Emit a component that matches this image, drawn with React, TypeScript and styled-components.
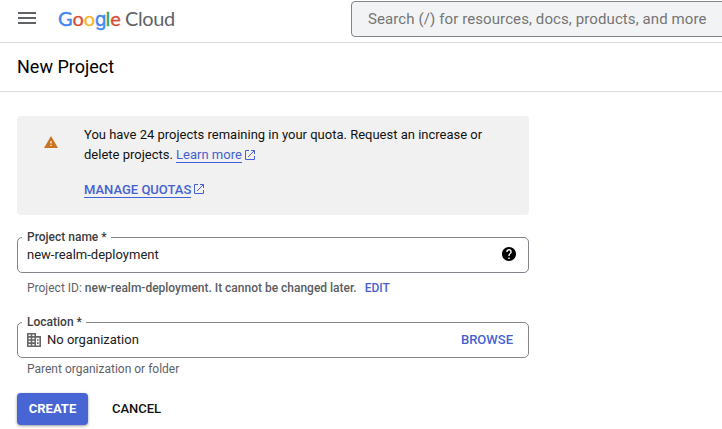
import React from "react";
import styled, { createGlobalStyle } from "styled-components";

const GlobalStyle = createGlobalStyle`
  * { box-sizing: border-box; }
  html, body { margin: 0; background: #fff; overflow: hidden; }
  body { font-family: Roboto, sans-serif; font-size: 13px; line-height: 20px; color: #000; }
  button { font: inherit; border: 0; background: none; padding: 0; margin: 0; cursor: pointer; }
  svg { display: block; flex: none; }
`;

const Page = styled.div`
  width: 722px;
  height: 429px;
  overflow: hidden;
`;

const TopBar = styled.header`
  display: flex;
  height: 43px;
  padding: 1px 0 0 18px;
  border-bottom: 1px solid #dadce0;
`;

const MenuButton = styled.button`
  flex: none;
  width: 18px;
  height: 12px;
  margin-top: 11px;
  display: flex;
  flex-direction: column;
  justify-content: space-between;
`;

const MenuLine = styled.span`
  width: 18px;
  height: 2px;
  background: #5f6368;
`;

const Logo = styled.div`
  display: flex;
  flex: none;
  width: 293px;
  margin-left: 22px;
  padding-top: 5px;
  font-family: Lato, sans-serif;
  font-size: 20px;
  line-height: 24px;
  color: #5f6368;
  white-space: pre;
`;

const Brand = styled.span`
  letter-spacing: -0.1px;
  width: 67px;
`;

const Product = styled.span`
  letter-spacing: -0.4px;
`;

const Letter = styled.span<{ $color: string; $round?: boolean }>`
  color: ${(p) => p.$color};
  font-family: ${(p) => (p.$round ? "Inter" : "Lato")}, sans-serif;
  font-size: ${(p) => (p.$round ? 18.5 : 20)}px;
  letter-spacing: ${(p) => (p.$round ? -0.7 : -0.1)}px;
  -webkit-text-stroke: 0.4px ${(p) => p.$color};
`;

const Search = styled.div`
  flex: none;
  width: 420px;
  height: 36px;
  padding-left: 16px;
  border: 1px solid #80868b;
  border-radius: 4px;
  background: #f1f3f4;
  color: #757575;
  font-size: 15px;
  line-height: 34px;
  letter-spacing: 0.1px;
`;

const TitleBar = styled.div`
  height: 49px;
  padding: 12px 17px 0;
  border-bottom: 1px solid #dadce0;
`;

const Title = styled.h1`
  margin: 0;
  font-size: 18px;
  font-weight: 400;
  line-height: 24px;
`;

const Content = styled.main`
  width: 529px;
  padding: 24px 0 0 17px;
`;

const Notice = styled.section`
  display: flex;
  height: 99px;
  padding: 9px 20px 0 27px;
  border-radius: 4px;
  background: #f1f1f1;
`;

const NoticeIcon = styled.div`
  width: 40px;
  padding-top: 11px;
`;

const NoticeText = styled.div`
  color: #111;
`;

const Line = styled.div`
  display: flex;
  align-items: center;
  height: 20px;
  white-space: pre;
`;

const LinkLine = styled(Line)`
  margin-top: 15px;
`;

const Link = styled.a<{ $strong?: boolean }>`
  height: 16px;
  margin-right: 3px;
  line-height: 16px;
  border-bottom: 1px solid #3f62d6;
  color: #4662d2;
  font-weight: ${(p) => (p.$strong ? 500 : 400)};
`;

const Field = styled.div`
  position: relative;
  display: flex;
  align-items: center;
  height: 36px;
  padding: 0 12px 0 9px;
  border: 1px solid #80868b;
  border-radius: 5px;
  color: #202124;
`;

const FieldGroup = styled.div<{ $top: number }>`
  margin-top: ${(p) => p.$top}px;
`;

const FieldLabel = styled.label`
  position: absolute;
  left: 4px;
  top: -9px;
  padding: 0 4px 0 5px;
  background: #fff;
  font-size: 12px;
  font-weight: 500;
  line-height: 16px;
  color: #3c4043;
`;

const Value = styled.span<{ $gap?: number }>`
  flex: 1;
  padding-left: ${(p) => p.$gap ?? 0}px;
`;

const Hint = styled.div<{ $top: number }>`
  display: flex;
  margin-top: ${(p) => p.$top}px;
  padding-left: 10px;
  font-size: 12px;
  line-height: 16px;
  color: #5f6368;
  white-space: pre;
`;

const HintStrong = styled.span`
  color: #5a5d61;
  font-weight: 500;
  letter-spacing: -0.01px;
`;

const TextButton = styled.button<{ $left?: number; $right?: number }>`
  margin-left: ${(p) => p.$left ?? 0}px;
  margin-right: ${(p) => p.$right ?? 0}px;
  color: #4662d2;
  font-weight: 500;
`;

const Actions = styled.div`
  display: flex;
  margin-top: 16px;
`;

const Action = styled.button<{ $primary?: boolean }>`
  height: 32px;
  width: ${(p) => (p.$primary ? 71 : 97)}px;
  border-radius: 4px;
  font-weight: ${(p) => (p.$primary ? 700 : 500)};
  color: ${(p) => (p.$primary ? "#fff" : "#111")};
  background: ${(p) => (p.$primary ? "#4765d3" : "transparent")};
  box-shadow: ${(p) => (p.$primary ? "0 1px 3px rgba(0,0,0,.4)" : "none")};
`;

const brandLetters: [string, string][] = [
  ["G", "#4285f4"],
  ["o", "#db4e35"],
  ["o", "#f4b72b"],
  ["g", "#4285f4"],
  ["l", "#34a853"],
  ["e", "#db4e35"],
];

const OpenMark = styled.svg<{ $raised?: boolean }>`
  margin-bottom: ${(p) => (p.$raised ? 2 : 0)}px;
`;

const OpenIcon = ({ raised }: { raised?: boolean }) => (
  <OpenMark $raised={raised} width="10" height="10" viewBox="0 0 10 10" fill="none" stroke="#4662d2" strokeWidth="1">
    <path d="M4 .5H.5v9h9V6M6 .5h3.5V4M9.3.7 3 7" />
  </OpenMark>
);

const WarningIcon = () => (
  <svg width="14" height="12" viewBox="0 0 14 12">
    <path d="M7 0 14 12H0Z" fill="#cb7321" />
    <path d="M6.4 5h1.2v2.6H6.4ZM6.4 8.8h1.2v1.2H6.4Z" fill="#fff" />
  </svg>
);

const HelpMark = styled.svg`
  margin-bottom: 2px;
`;

const HelpIcon = () => (
  <HelpMark width="14" height="14" viewBox="2 2 20 20">
    <path d="M12 2C6.48 2 2 6.48 2 12s4.48 10 10 10 10-4.48 10-10S17.52 2 12 2zm1 17h-2v-2h2v2zm2.07-7.75-.9.92C13.45 12.9 13 13.5 13 15h-2v-.5c0-1.1.45-2.1 1.17-2.83l1.24-1.26c.37-.36.59-.86.59-1.41 0-1.1-.9-2-2-2s-2 .9-2 2H8c0-2.21 1.79-4 4-4s4 1.79 4 4c0 .88-.36 1.68-.93 2.25z" />
  </HelpMark>
);

const OrganizationIcon = () => (
  <svg width="15" height="14" viewBox="0 0 15 14" fill="none" stroke="#666" strokeWidth="1.6">
    <path d="M.8.8h7.4v12.4H.8ZM.8 3.9h7.4M.8 7h7.4M.8 10.1h7.4M4.5.8v12.4M8.2 3.9h5v9.3h-5M10 7h1.6M10 10.1h1.6" />
  </svg>
);

export default function App() {
  return (
    <Page>
      <GlobalStyle />
      <TopBar>
        <MenuButton aria-label="Menu">
          <MenuLine />
          <MenuLine />
          <MenuLine />
        </MenuButton>
        <Logo>
          <Brand>
            {brandLetters.map(([char, color], i) => (
              <Letter key={i} $color={color} $round={char === "g"}>{char}</Letter>
            ))}
          </Brand>
          <Product>Cloud</Product>
        </Logo>
        <Search>Search (/) for resources, docs, products, and more</Search>
      </TopBar>
      <TitleBar>
        <Title>New Project</Title>
      </TitleBar>
      <Content>
        <Notice>
          <NoticeIcon><WarningIcon /></NoticeIcon>
          <NoticeText>
            <Line>You have 24 projects remaining in your quota. Request an increase or</Line>
            <Line>
              {"delete projects. "}
              <Link>Learn more</Link>
              <OpenIcon />
            </Line>
            <LinkLine>
              <Link $strong>MANAGE QUOTAS</Link>
              <OpenIcon raised />
            </LinkLine>
          </NoticeText>
        </Notice>
        <FieldGroup $top={22}>
          <Field>
            <FieldLabel>Project name *</FieldLabel>
            <Value>new-realm-deployment</Value>
            <HelpIcon />
          </Field>
          <Hint $top={7}>
            {"Project ID: "}
            <HintStrong>new-realm-deployment. It cannot be changed later.</HintStrong>
            <TextButton $left={8}>EDIT</TextButton>
          </Hint>
        </FieldGroup>
        <FieldGroup $top={26}>
          <Field>
            <FieldLabel>Location *</FieldLabel>
            <OrganizationIcon />
            <Value $gap={5}>No organization</Value>
            <TextButton $right={3}>BROWSE</TextButton>
          </Field>
          <Hint $top={3}>Parent organization or folder</Hint>
        </FieldGroup>
        <Actions>
          <Action $primary>CREATE</Action>
          <Action>CANCEL</Action>
        </Actions>
      </Content>
    </Page>
  );
}
